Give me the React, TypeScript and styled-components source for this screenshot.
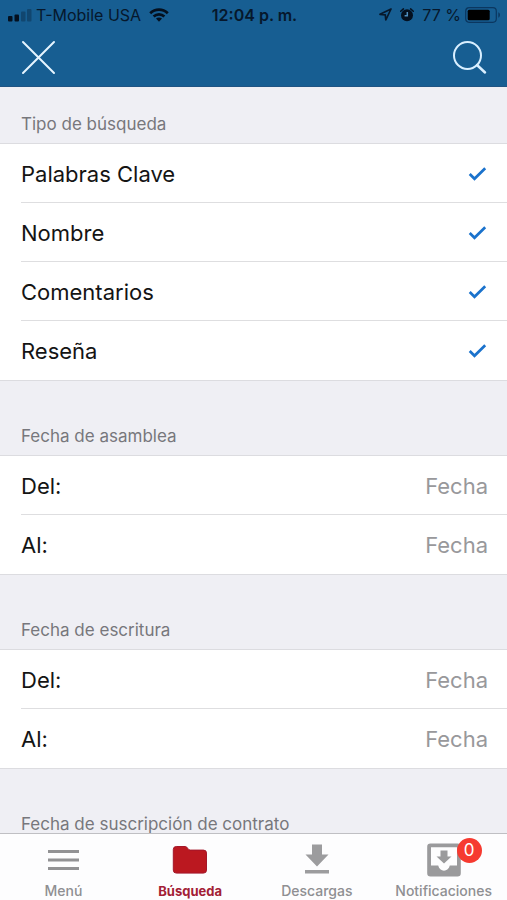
import React, { useState } from "react";
import styled, { createGlobalStyle } from "styled-components";

const GlobalStyle = createGlobalStyle`
  * { box-sizing: border-box; }
  body { margin: 0; background: #efeff4; }
  body, button, input { font-family: Inter, "Liberation Sans", sans-serif; }
`;

const Screen = styled.div`
  display: flex;
  flex-direction: column;
  height: 100vh;
  background: #efeff4;
`;

const Header = styled.header`
  flex: none;
  background: #175e92;
  border-bottom: 1px solid #205483;
`;

const StatusBar = styled.div`
  display: grid;
  grid-template-columns: 1fr auto 1fr;
  align-items: center;
  height: 29px;
  padding: 0 6px 0 8px;
  color: #06182c;
  font-size: 16px;
  line-height: 20px;
  white-space: nowrap;
`;

const StatusGroup = styled.div<{ $end?: boolean }>`
  display: flex;
  align-items: center;
  justify-content: ${(p) => (p.$end ? "flex-end" : "flex-start")};
  gap: 8px;
`;

const StatusPair = styled.div`
  display: flex;
  align-items: center;
  gap: 4px;
`;

const Clock = styled.time`
  font-weight: 600;
`;

const Toolbar = styled.div`
  display: flex;
  justify-content: space-between;
  align-items: center;
  height: 57px;
  padding: 0 19px 0 21px;
`;

const IconButton = styled.button`
  display: flex;
  padding: 0;
  border: 0;
  background: none;
  cursor: pointer;
`;

const Content = styled.main`
  flex: 1;
  min-height: 0;
  overflow-y: auto;
  scrollbar-width: none;
`;

const Section = styled.section<{ $first?: boolean }>`
  padding-top: ${(p) => (p.$first ? 27 : 45)}px;
`;

const SectionTitle = styled.h2`
  margin: 0;
  padding: 0 21px 9px;
  color: #77777c;
  font-size: 17px;
  font-weight: 400;
  line-height: 20px;
`;

const Group = styled.div`
  background: #fff;
  border-top: 1px solid #dcdce0;
  border-bottom: 1px solid #dcdce0;
`;

const Row = styled.label`
  display: flex;
  padding-left: 21px;
  color: #141414;
  font-size: 22px;
  line-height: 28px;
`;

const RowBody = styled.span`
  display: flex;
  flex: 1;
  min-width: 0;
  align-items: center;
  justify-content: space-between;
  height: 59px;
  padding: 1px 19px 0 0;
  border-bottom: 1px solid #dedee0;

  ${Row}:last-child & {
    border-bottom-color: transparent;
  }
`;

const CheckSlot = styled.span`
  display: grid;
  place-items: center;
`;

const CheckInput = styled.input`
  grid-area: 1 / 1;
  width: 20px;
  height: 20px;
  margin: 0;
  appearance: none;
  cursor: pointer;

  &:not(:checked) + svg {
    visibility: hidden;
  }
`;

const CheckMark = styled.svg`
  grid-area: 1 / 1;
  pointer-events: none;
`;

const DateInput = styled.input`
  flex: 1;
  min-width: 0;
  padding: 0;
  border: 0;
  outline: 0;
  background: none;
  color: #141414;
  font-size: 22px;
  line-height: 28px;
  text-align: right;

  &::placeholder {
    color: #98989b;
    opacity: 1;
  }
`;

const TabBar = styled.nav`
  display: grid;
  grid-template-columns: repeat(4, 1fr);
  flex: none;
  height: 67px;
  border-top: 1px solid #bfbfc3;
  background: #fdfdfe;
`;

const Tab = styled.button<{ $active?: boolean }>`
  display: flex;
  flex-direction: column;
  align-items: center;
  gap: 5px;
  padding: 8px 0 0;
  border: 0;
  background: none;
  color: ${(p) => (p.$active ? "#a32035" : "#8f8f92")};
  font-size: ${(p) => (p.$active ? 13 : 14)}px;
  font-weight: ${(p) => (p.$active ? 700 : 500)};
  line-height: 16px;
  cursor: pointer;
`;

const TabIcon = styled.span`
  position: relative;
  display: flex;
  align-items: center;
  justify-content: center;
  width: 36px;
  height: 36px;
`;

const Badge = styled.span`
  position: absolute;
  top: -4px;
  right: -20px;
  width: 25px;
  height: 25px;
  border-radius: 50%;
  background: #f63a30;
  color: #fff;
  font-size: 17px;
  font-weight: 400;
  line-height: 25px;
  text-align: center;
`;

const SignalIcon = () => (
  <svg width="24" height="14" viewBox="0 0 24 14" fill="#04101f">
    <rect x="0" y="8" width="4.500" height="5.500" rx="1" />
    <rect x="6.500" y="6.500" width="4.500" height="7" rx="1" />
    <rect x="13" y="3.500" width="4.500" height="10" rx="1" opacity=".3" />
    <rect x="19" y="1" width="4.500" height="12.500" rx="1" opacity=".3" />
  </svg>
);

const WifiIcon = () => (
  <svg width="20" height="14" viewBox="0 0 20 14" fill="none" stroke="#04101f" strokeWidth="2.700">
    <path d="M1.200 5.200C6.200.400 13.800.400 18.800 5.200" />
    <path d="M4.600 8.600c3.100-2.900 7.700-2.900 10.800 0" />
    <path d="M10 13.700 7 10.600c1.700-1.500 4.300-1.500 6 0z" fill="#04101f" stroke="none" />
  </svg>
);

const LocationIcon = () => (
  <svg width="13" height="13" viewBox="0 0 13 13" fill="none" stroke="#06182c" strokeWidth="1.700" strokeLinejoin="round">
    <path d="M12 1 1 6.300l5.300.500.500 5.200z" />
  </svg>
);

const AlarmIcon = () => (
  <svg width="14" height="14" viewBox="0 0 14 14">
    <circle cx="7" cy="7.300" r="6" fill="#04101f" />
    <path d="M.700 3.200 3.400.900M13.300 3.200 10.600.900" stroke="#04101f" strokeWidth="1.500" strokeLinecap="round" />
    <path d="M7.300 4v3.800H4.600" fill="none" stroke="#4f8fc0" strokeWidth="1.500" />
  </svg>
);

const BatteryIcon = () => (
  <svg width="36" height="16" viewBox="0 0 36 16">
    <rect x=".700" y=".700" width="30.600" height="14.600" rx="3.500" fill="none" stroke="#0b3760" strokeWidth="1.200" />
    <rect x="2.700" y="2.700" width="22" height="10.600" rx="1.500" fill="#000" />
    <path d="M33.300 5.300c2.200.800 2.200 4.600 0 5.400z" fill="#0b3760" />
  </svg>
);

const CloseIcon = () => (
  <svg width="35" height="35" viewBox="0 0 35 35" stroke="#e6f5ff" strokeWidth="2" strokeLinecap="round">
    <path d="M2 2 33 33M33 2 2 33" />
  </svg>
);

const SearchIcon = () => (
  <svg width="36" height="35" viewBox="0 0 36 35" fill="none" stroke="#d9efff" strokeWidth="2">
    <circle cx="15.500" cy="15.500" r="13.500" />
    <path d="m25 25 8 7.500" strokeWidth="2.500" strokeLinecap="round" />
  </svg>
);

const MenuIcon = () => (
  <svg width="32" height="24" viewBox="0 0 32 24" stroke="#929294" strokeWidth="3">
    <path d="M1 3.500h31M1 12h31M1 20.500h31" />
  </svg>
);

const FolderIcon = () => (
  <svg width="36" height="30" viewBox="0 0 36 30">
    <path
      d="M4.300 1.500h9.200c1.700 0 2.600 3.600 4.600 3.600h13.400a3 3 0 0 1 3 3v17a3 3 0 0 1-3 3H4.300a3 3 0 0 1-3-3V4.500a3 3 0 0 1 3-3z"
      fill="#bb1820"
      stroke="#a3172a"
    />
  </svg>
);

const DownloadIcon = () => (
  <svg width="26" height="32" viewBox="0 0 26 32" fill="#9c9c9e">
    <path d="M8 .500h10v10h6.500L13 22.500 1.500 10.500H8zM1 26h24v3.500H1z" />
  </svg>
);

const InboxIcon = () => (
  <svg width="36" height="36" viewBox="0 0 36 36" fill="#9a9a9c">
    <path
      fillRule="evenodd"
      d="M4.500 1.500h27a3.300 3.300 0 0 1 3.300 3.300v26.400a3.300 3.300 0 0 1-3.300 3.300h-27a3.300 3.300 0 0 1-3.300-3.300V4.800a3.300 3.300 0 0 1 3.300-3.300zM5 5.200v18.300h7.200c.8 3.200 3 5.200 5.800 5.200s5-2 5.800-5.200H31V5.200z"
    />
    <path d="M14.500 8.500h7v6h4L18 21.500 10.500 14.500h4z" />
  </svg>
);

const searchTypes = ["Palabras Clave", "Nombre", "Comentarios", "Reseña"];

const dateSections = [
  { title: "Fecha de asamblea", fields: ["Del:", "Al:"] },
  { title: "Fecha de escritura", fields: ["Del:", "Al:"] },
  { title: "Fecha de suscripción de contrato", fields: [] as string[] },
];

const tabs = [
  { label: "Menú", Icon: MenuIcon },
  { label: "Búsqueda", Icon: FolderIcon },
  { label: "Descargas", Icon: DownloadIcon },
  { label: "Notificaciones", Icon: InboxIcon, badge: 0 },
];

export default function App() {
  const [active, setActive] = useState("Búsqueda");

  return (
    <Screen>
      <GlobalStyle />
      <Header>
        <StatusBar>
          <StatusGroup>
            <StatusPair>
              <SignalIcon />
              <span>T-Mobile USA</span>
            </StatusPair>
            <WifiIcon />
          </StatusGroup>
          <Clock>12:04 p. m.</Clock>
          <StatusGroup $end>
            <LocationIcon />
            <AlarmIcon />
            <StatusPair>
              <span>77 %</span>
              <BatteryIcon />
            </StatusPair>
          </StatusGroup>
        </StatusBar>
        <Toolbar>
          <IconButton type="button" aria-label="Cerrar">
            <CloseIcon />
          </IconButton>
          <IconButton type="button" aria-label="Buscar">
            <SearchIcon />
          </IconButton>
        </Toolbar>
      </Header>

      <Content>
        <Section $first>
          <SectionTitle>Tipo de búsqueda</SectionTitle>
          <Group>
            {searchTypes.map((type) => (
              <Row key={type}>
                <RowBody>
                  {type}
                  <CheckSlot>
                    <CheckInput type="checkbox" defaultChecked />
                    <CheckMark width="20" height="16" viewBox="0 0 20 16" fill="none" stroke="#1a72cc" strokeWidth="2.700">
                      <path d="m1.700 8 4.800 4.800L17.200 2.300" />
                    </CheckMark>
                  </CheckSlot>
                </RowBody>
              </Row>
            ))}
          </Group>
        </Section>
        {dateSections.map(({ title, fields }) => (
          <Section key={title}>
            <SectionTitle>{title}</SectionTitle>
            {fields.length > 0 && (
              <Group>
                {fields.map((label) => (
                  <Row key={label}>
                    <RowBody>
                      {label}
                      <DateInput type="text" placeholder="Fecha" />
                    </RowBody>
                  </Row>
                ))}
              </Group>
            )}
          </Section>
        ))}
      </Content>

      <TabBar>
        {tabs.map(({ label, Icon, badge }) => (
          <Tab key={label} type="button" $active={label === active} onClick={() => setActive(label)}>
            <TabIcon>
              <Icon />
              {badge !== undefined && <Badge>{badge}</Badge>}
            </TabIcon>
            {label}
          </Tab>
        ))}
      </TabBar>
    </Screen>
  );
}
